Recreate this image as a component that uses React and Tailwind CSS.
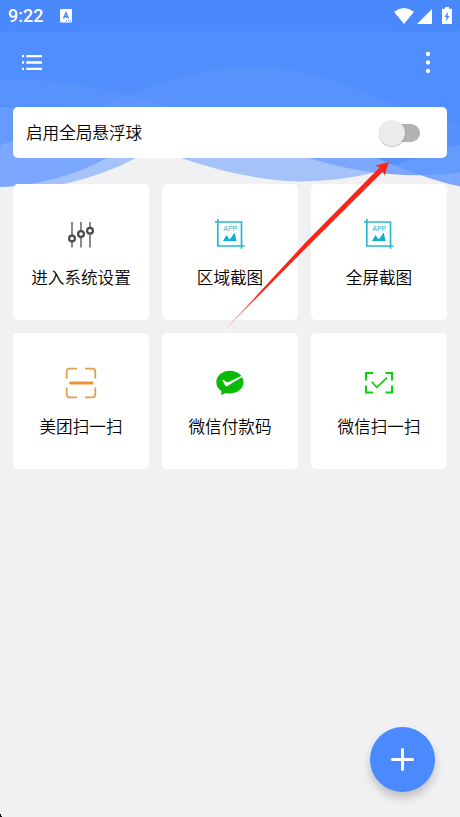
import React, { useState } from "react";

const SlidersIcon = () => (
    <svg width="32" height="32" viewBox="0 0 32 32" fill="none">
        <path d="M7 4v13M7 23v6.500M16 4v9M16 18.500v11M25 4v5.500M25 15v14.500" stroke="#858585" strokeWidth="1.900" />
        <circle cx="7" cy="20.500" r="2.900" stroke="#4a4a4a" strokeWidth="2.200" />
        <circle cx="16" cy="16" r="2.900" stroke="#4a4a4a" strokeWidth="2.200" />
        <circle cx="25" cy="12.800" r="2.900" stroke="#4a4a4a" strokeWidth="2.200" />
    </svg>
);

const CropIcon = () => (
    <svg width="32" height="32" viewBox="0 0 32 32" fill="none">
        <path d="M1 4H27.500V30.800M3.800 1V28H30.500" stroke="#25b7d3" strokeWidth="1.700" />
        <text x="16.300" y="13" textAnchor="middle" fontSize="7" fill="#25b7d3" fontFamily="Liberation Sans, sans-serif">APP</text>
        <path d="M9 23l3.500-6 2.800 4.200 1.200-.8 4.200-6 1.800 8.600z" fill="#0aafd2" />
    </svg>
);

const ScanLineIcon = () => (
    <svg width="32" height="32" viewBox="0 0 32 32" fill="none">
        <path d="M1.700 11.500V4.500q0-2.800 2.800-2.800H12M20 1.700h7.500q2.800 0 2.800 2.800v7M30.300 20.500v7q0 2.800-2.800 2.800H20M12 30.300H4.500q-2.800 0-2.800-2.800v-7" stroke="#e0a04f" strokeWidth="1.800" />
        <path d="M5.500 16H27" stroke="#ee9236" strokeWidth="2.800" strokeLinecap="round" />
    </svg>
);

const WechatPayIcon = () => (
    <svg width="32" height="32" viewBox="0 0 32 32">
        <path d="M16 3.700C8.400 3.700 2.300 8.600 2.300 15c0 4.200 2.200 7.300 5.300 9.300L7 27.900l4.700-2c1.400.4 2.800.5 4.300.5 7.700 0 13.500-4.900 13.500-11.300S23.700 3.700 16 3.700z" fill="#09bb07" />
        <path d="M8.300 13.200q.5-.9 1.300-.2l3.300 2.200q.6.300 1.300 0L27.500 8.800l.6 1.200-14.600 8.900q-1.700 1-2.500-.6z" fill="#fff" />
    </svg>
);

const ScanCheckIcon = () => (
    <svg width="32" height="32" viewBox="0 0 32 32" fill="none" stroke="#09d112" strokeWidth="2">
        <path d="M3 13.500V6H10M22.500 6h6.500V13.500M29 18.500V25.500h-6.500M10 25.500H3v-7" />
        <path d="M8.800 14.800l5 5.500L24 10.700" strokeWidth="1.700" />
    </svg>
);

const actions = [
    { label: "进入系统设置", Icon: SlidersIcon },
    { label: "区域截图", Icon: CropIcon },
    { label: "全屏截图", Icon: CropIcon },
    { label: "美团扫一扫", Icon: ScanLineIcon },
    { label: "微信付款码", Icon: WechatPayIcon },
    { label: "微信扫一扫", Icon: ScanCheckIcon },
];

// layered waves behind the header
const Waves = () => (
    <svg className="absolute left-0 top-0" width="460" height="190" viewBox="0 0 460 190">
        <path d="M0 100H460V140Q380 181.500 300 181.500Q245 180 181 158H136Q104 175 64 184L0 187Z" fill="#a5c2f9" />
        <path d="M0 100H460V172.500Q385 182 309 158H107Q60 184 0 187Z" fill="#7ba7fe" />
        <path d="M377 158L460 120V186.500Q430 180 400 167Z" fill="#7ba7fe" />
        <path d="M377 158L460 120V172.500Q439 175.500 420 175Q400 168 377 158Z" fill="#659bff" />
        <path d="M0 100H20V139L0 145Z" fill="#659bff" />
        <path d="M377 158L460 107V144.500Q428 155 394 165Z" fill="#5791fe" />
        <rect y="31" width="460" height="76" fill="#518efd" />
        <path d="M0 80Q72 78 145 100L172 108L0 106Z" fill="#fff" fillOpacity="0.045" />
        <path d="M96 109L118 100Q190 67 250 67C300 67 340 81 384 100L404 109Z" fill="#fff" fillOpacity="0.045" />
        <path d="M440 107H460V126L440 120Z" fill="#518efd" />
        <rect width="460" height="31" fill="#4988fd" />
    </svg>
);

const StatusBar = () => (
    <div className="h-[31px] flex items-center justify-between pl-2 pr-[6px] text-white">
        <div className="flex items-center gap-[17px]">
            <span className="text-[18px] leading-none font-medium font-['Roboto',sans-serif]">9:22</span>
            <svg width="12" height="14" viewBox="0 0 12 14">
                <rect width="12" height="13.500" rx="1" fill="#fff" />
                <path d="M3.500 9.500L6 3.800l2.500 5.700M4.400 7.700h3.200" stroke="#4988fd" strokeWidth="1.500" fill="none" />
                <path d="M6 11.800h5.500" stroke="#4988fd" strokeDasharray="1 1" />
            </svg>
        </div>
        <svg width="60" height="20" viewBox="394 5 60 20" fill="#fff">
            <path d="M394 15.200Q404 8 414 15.200L404 27.500z" transform="translate(0 -4.500)" />
            <path d="M417 22.900L432 8v14.900z" />
            <path d="M442 7.800h3V6h4v1.800h3V23h-10z" />
            <path d="M448.300 10.800L444.300 16h2.200l-.7 4.500 3.700-5.500h-2z" fill="#4988fd" />
        </svg>
    </div>
);

export default function App() {
    const [enabled, setEnabled] = useState(false);

    return (
        <div className="relative w-[460px] h-[817px] overflow-hidden bg-[#f1f1f4] font-['Noto_Sans_CJK_SC',sans-serif] font-[350] text-black">
            <Waves />
            <div className="relative">
                <StatusBar />
                <header className="h-[76px] flex justify-between pt-[20px] pl-[22px] pr-[29px]">
                    <svg width="20" height="24" viewBox="0 0 20 24" stroke="#fff" strokeWidth="2.300">
                        <path d="M0 5.200h2M4.300 5.200H20M0 11.500h2M4.300 11.500H20M0 17.900h2M4.300 17.900H20" />
                    </svg>
                    <svg width="6" height="24" viewBox="0 0 6 24" fill="#fff">
                        <circle cx="3" cy="3" r="2.150" />
                        <circle cx="3" cy="11.500" r="2.150" />
                        <circle cx="3" cy="20" r="2.150" />
                    </svg>
                </header>
                <main className="px-[13px]">
                    <div className="h-[51px] flex items-center justify-between bg-white rounded-[5px] pl-[13px] pr-[27px]">
                        <span className="text-[16.600px] leading-6 pb-px">启用全局悬浮球</span>
                        <button className="w-[41px] h-[26px] flex items-center" onClick={() => setEnabled(!enabled)}>
                            <span className="w-[26px] h-[26px] shrink-0 rounded-full bg-[#ebebeb] shadow-[0_1px_1px_rgba(0,0,0,0.25)] z-10"></span>
                            <span className="w-[34px] h-[18px] shrink-0 -ml-[19px] rounded-full bg-[#b2b2b2]"></span>
                        </button>
                    </div>
                    <div className="mt-[26px] grid grid-cols-3 gap-[13px]">
                        {actions.map(({ label, Icon }) => (
                            <div key={label} className="h-[136px] flex flex-col items-center bg-white rounded-[5px] pt-[34px]">
                                <Icon />
                                <span className="mt-[15px] text-[16.600px] leading-6 whitespace-nowrap">{label}</span>
                            </div>
                        ))}
                    </div>
                </main>
            </div>

            {/* pointer to the switch */}
            <svg className="absolute left-0 top-0 pointer-events-none" width="460" height="340" viewBox="0 0 460 340">
                <defs>
                    <linearGradient id="arrow" gradientUnits="userSpaceOnUse" x1="223" y1="332" x2="262" y2="292">
                        <stop stopColor="#ff2416" stopOpacity="0.400" />
                        <stop offset="1" stopColor="#ff2416" />
                    </linearGradient>
                </defs>
                <path d="M222.500 332.500L305 243L379.500 167.500L375.500 165.500L389 162L384.500 175.500L383 171.500L307 247Z" fill="url(#arrow)" />
            </svg>

            <button className="absolute left-[370px] top-[727px] w-[65px] h-[65px] flex items-center justify-center rounded-full bg-[#4a89fe] shadow-[0_6px_10px_rgba(0,0,0,0.200)]">
                <svg width="25" height="25" viewBox="0 0 25 25" stroke="#fff" strokeWidth="3" strokeLinecap="round">
                    <path d="M12.500 2.500v20M2.500 12.500h20" />
                </svg>
            </button>
            <svg className="absolute left-0 bottom-0" width="2" height="3">
                <path d="M0 0h1v2h1v1H0z" fill="#111" />
            </svg>
        </div>
    );
}
